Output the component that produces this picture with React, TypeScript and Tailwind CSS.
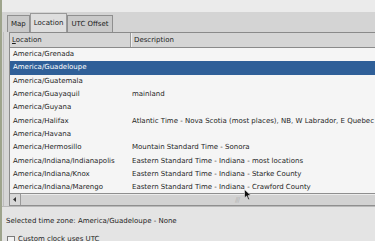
import React from 'react';

const ROWS = [
  { loc: 'America/Grenada', desc: '' },
  { loc: 'America/Guadeloupe', desc: '', selected: true },
  { loc: 'America/Guatemala', desc: '' },
  { loc: 'America/Guayaquil', desc: 'mainland' },
  { loc: 'America/Guyana', desc: '' },
  { loc: 'America/Halifax', desc: 'Atlantic Time - Nova Scotia (most places), NB, W Labrador, E Quebec' },
  { loc: 'America/Havana', desc: '' },
  { loc: 'America/Hermosillo', desc: 'Mountain Standard Time - Sonora' },
  { loc: 'America/Indiana/Indianapolis', desc: 'Eastern Standard Time - Indiana - most locations' },
  { loc: 'America/Indiana/Knox', desc: 'Eastern Standard Time - Indiana - Starke County' },
  { loc: 'America/Indiana/Marengo', desc: 'Eastern Standard Time - Indiana - Crawford County' },
];

function Tab({ label, active }: { label: string; active?: boolean }) {
  return (
    <div
      className={
        active
          ? 'h-[19px] px-[3px] flex items-center bg-[#dedede] border border-b-0 border-[#9a9a9a] text-[#1a1a1a]'
          : 'h-[17px] px-[3px] flex items-center bg-[#c9c9c9] border border-b-0 border-[#8f8f8f] text-[#1a1a1a]'
      }
    >
      {label}
    </div>
  );
}

export default function App() {
  return (
    <div
      className="relative w-[375px] h-[241px] overflow-hidden flex bg-[#e4e4e4] text-[7px] leading-none"
      style={{ fontFamily: '"DejaVu Sans", sans-serif' }}
    >
      {/* window edge */}
      <div className="w-[2px] h-full bg-[#9ea48c]" />

      <div className="flex-1 flex flex-col min-w-0">
        <div className="h-[12px] shrink-0 bg-[#ebebeb]" />

        {/* tabs */}
        <div className="h-[20px] shrink-0 bg-[#d4d4d4] flex items-end pl-[5px]">
          <Tab label="Map" />
          <Tab label="Location" active />
          <Tab label="UTC Offset" />
        </div>

        {/* table panel */}
        <div className="h-[174px] shrink-0 flex bg-[#d6d6d6]">
          <div className="w-[1px] bg-[#bdbdbd] ml-[1px]" />
          <div className="w-[5px]" />
          <div className="flex-1 flex flex-col min-w-0 border-l border-[#8d8d8d] bg-[#f5f5f5]">
            {/* header */}
            <div className="h-[16px] shrink-0 flex border-t border-b border-[#8a8a8a] bg-[#d5d5d5] text-[#1e1e1e]">
              <div className="w-[121px] shrink-0 flex items-center pl-[2px] border-r border-[#9a9a9a]">
                <span><span className="underline">L</span>ocation</span>
              </div>
              <div className="flex-1 flex items-center pl-[2px] border-l border-[#f0f0f0]">Description</div>
            </div>

            {/* rows */}
            <div className="flex-1 flex flex-col overflow-hidden">
              {ROWS.map((r) => (
                <div
                  key={r.loc}
                  className={
                    r.selected
                      ? 'h-[13.3px] shrink-0 flex items-center bg-[#2f5f98] text-white whitespace-nowrap'
                      : 'h-[13.3px] shrink-0 flex items-center text-[#1e1e1e] whitespace-nowrap'
                  }
                >
                  <div className="w-[122px] shrink-0 pl-[3px]">{r.loc}</div>
                  <div className="flex-1">{r.desc}</div>
                </div>
              ))}
            </div>

            {/* horizontal scrollbar */}
            <div className="h-[13px] shrink-0 flex border-t border-b border-[#8f8f8f] bg-[#d2d2d2]">
              <div className="w-[11px] flex items-center justify-center border-r border-[#9a9a9a] bg-[#d8d8d8]">
                <svg width="4" height="5" viewBox="0 0 4 5">
                  <path d="M3 0 L0 2.5 L3 5 Z" fill="#333" />
                </svg>
              </div>
              <div className="flex-1 flex items-center border-t border-[#ececec]">
                <div className="ml-[214px] text-[#b5b5b5] tracking-[-1px]">///</div>
              </div>
            </div>
          </div>
        </div>

        <div className="h-px shrink-0 bg-[#b9b9b9]" />

        {/* status */}
        <div className="shrink-0 flex flex-col pl-[4px] text-[#1e1e1e]">
          <div className="h-[28px] flex items-center pt-[1px]">Selected time zone: America/Guadeloupe - None</div>
          <div className="flex items-start gap-[3px] pl-[1px] pt-[1px]">
            <div className="w-[8px] h-[8px] border border-[#7a7a7a] bg-[#f2f2f2]" />
            <span>Custom clock uses UTC</span>
          </div>
        </div>
      </div>

      {/* mouse pointer */}
      <svg className="absolute left-[244px] top-[189px]" width="8" height="12" viewBox="0 0 8 12">
        <path d="M0.5 0.5 L0.5 9 L2.6 7 L4.2 10.8 L5.6 10.2 L4 6.6 L7 6.6 Z" fill="#111" stroke="#eee" strokeWidth="0.6" />
      </svg>
    </div>
  );
}
